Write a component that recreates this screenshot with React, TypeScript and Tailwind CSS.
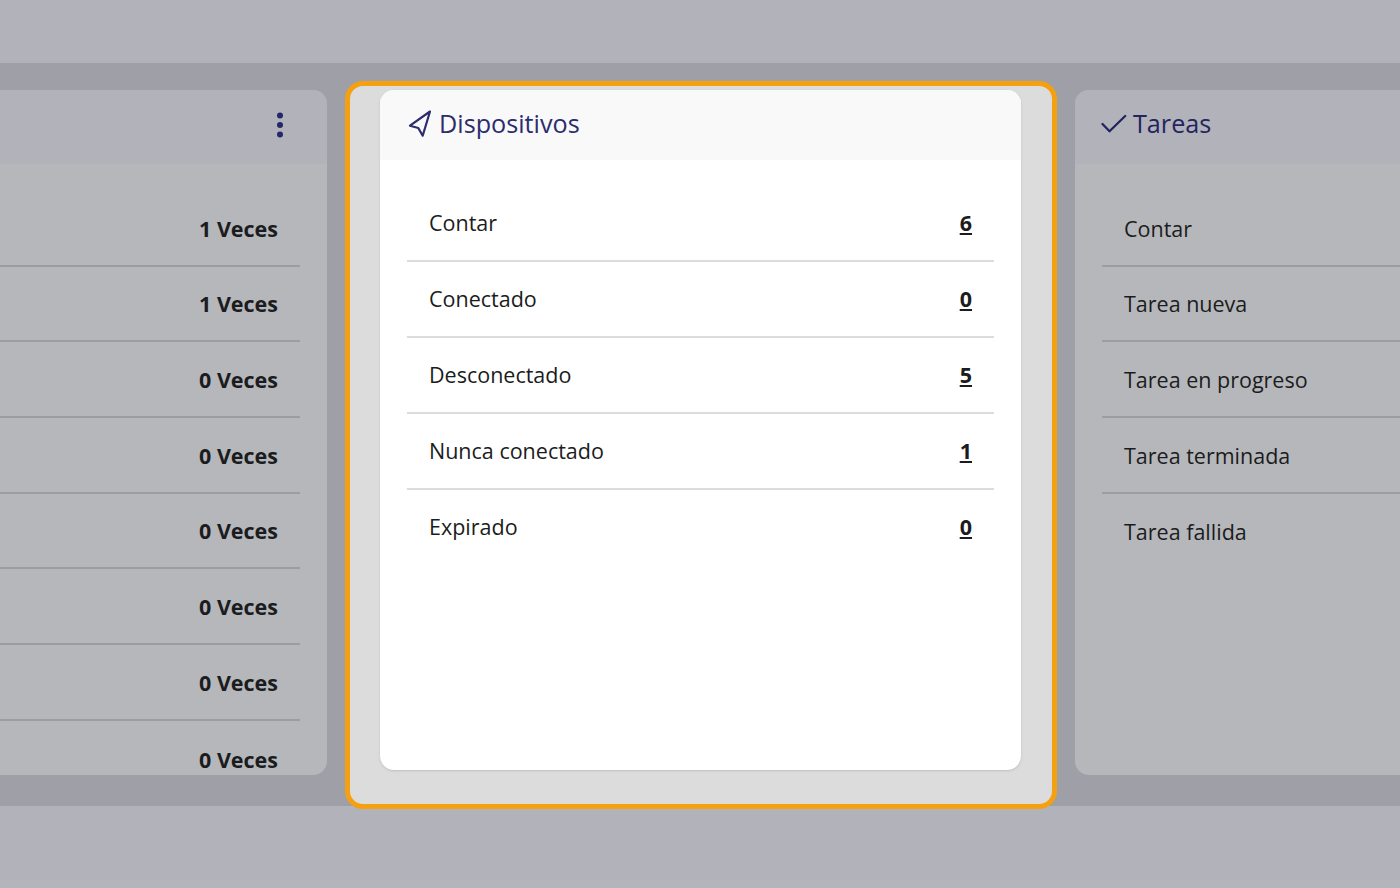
import React from 'react';

const timesRows = ['1 Veces', '1 Veces', '0 Veces', '0 Veces', '0 Veces', '0 Veces', '0 Veces', '0 Veces'];
const deviceRows = [
  { label: 'Contar', value: 6 },
  { label: 'Conectado', value: 0 },
  { label: 'Desconectado', value: 5 },
  { label: 'Nunca conectado', value: 1 },
  { label: 'Expirado', value: 0 },
];
const taskRows = ['Contar', 'Tarea nueva', 'Tarea en progreso', 'Tarea terminada', 'Tarea fallida'];

const App: React.FC = () => {
  return (
    <div className="h-[888px] w-[1400px] overflow-hidden bg-[#b1b2ba] font-['Open_Sans',sans-serif] text-[21.5px] text-[#1b1c20]">
      <div className="h-[63px]"></div>

      <div className="flex h-[743px] items-start justify-center gap-[18px] bg-[#9e9fa7] pl-[2px] pt-[27px]">
        {/* Left card, mostly out of view */}
        <div className="h-[685px] w-[640px] shrink-0 overflow-hidden rounded-[14px] bg-[#b6b7bb]">
          <div className="flex h-[74px] items-center justify-end bg-[#b1b2ba] pb-[4px] pr-[36px]">
            <svg width="22" height="30" viewBox="0 0 22 30" className="text-[#26266a]" fill="currentColor">
              <circle cx="11" cy="5.5" r="3" />
              <circle cx="11" cy="15" r="3" />
              <circle cx="11" cy="24.5" r="3" />
            </svg>
          </div>
          <div className="px-[27px] pt-[27px]">
            {timesRows.map((text, i) => (
              <div
                key={i}
                className="flex h-[75.7px] items-center justify-end border-b-2 border-[#9c9da3] pr-[22px] pt-[2px] font-bold last:border-b-0"
              >
                {text}
              </div>
            ))}
          </div>
        </div>

        {/* Highlighted card */}
        <div className="relative z-10 -mt-[9px] h-[728px] w-[712px] shrink-0 rounded-[18px] border-[5px] border-[#f5a010] bg-[#dcdcdc] pl-[30px] pt-1">
          <div className="h-[680px] w-[641px] overflow-hidden rounded-[14px] bg-white shadow-sm">
            <div className="flex h-[70px] items-center gap-[5px] bg-[#f9f9f9] pb-[2px] pl-[28px] text-[25.2px] text-[#2c2c6e]">
              <svg width="26" height="28" viewBox="0 0 26 28" fill="none" stroke="currentColor" strokeWidth="2.2" strokeLinejoin="round">
                <polygon points="22,1.5 2,15.7 10.3,18 14.7,25.7" />
              </svg>
              <span>Dispositivos</span>
            </div>
            <div className="px-[27px] pt-[26.4px]">
              {deviceRows.map((row) => (
                <div
                  key={row.label}
                  className="flex h-[75.8px] items-center justify-between border-b-2 border-[#dcdcdc] px-[22px] last:border-b-0"
                >
                  <span>{row.label}</span>
                  <a className="font-bold underline">{row.value}</a>
                </div>
              ))}
            </div>
          </div>
        </div>

        {/* Right card */}
        <div className="h-[685px] w-[640px] shrink-0 overflow-hidden rounded-[14px] bg-[#b6b7bb]">
          <div className="flex h-[74px] items-center gap-[6px] bg-[#b1b2ba] pb-[6px] pl-[26px] text-[25.2px] text-[#24245f]">
            <svg width="26" height="20" viewBox="0 0 26 20" fill="none" stroke="currentColor" strokeWidth="2.3" strokeLinecap="round" strokeLinejoin="round">
              <polyline points="1.5,10 8.5,17.3 24.2,2" />
            </svg>
            <span>Tareas</span>
          </div>
          <div className="px-[27px] pt-[27px]">
            {taskRows.map((text) => (
              <div
                key={text}
                className="flex h-[75.7px] items-center border-b-2 border-[#9c9da3] pl-[22px] pt-[2px] last:border-b-0"
              >
                {text}
              </div>
            ))}
          </div>
        </div>
      </div>

      <div className="h-[74px]"></div>
      <div className="h-[8px] bg-[#b4b5bc]"></div>
    </div>
  );
};

export default App;
